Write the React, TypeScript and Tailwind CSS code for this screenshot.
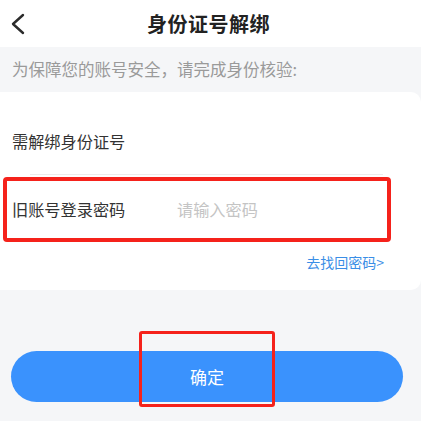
export default function App() {
  return (
    <div
      className="relative flex w-[429px] h-[421px] bg-white overflow-hidden"
      style={{ fontFamily: '"Noto Sans CJK SC", "Noto Sans", sans-serif' }}
    >
      <div className="flex flex-col w-[421px] h-full bg-[#f5f6f8]">
        {/* Header */}
        <div className="relative flex items-center justify-center h-[47px] bg-white">
          <svg
            className="absolute left-[10px] top-[13px]"
            width="16"
            height="22"
            viewBox="0 0 16 22"
            fill="none"
          >
            <path d="M13 2 L3 11 L13 20" stroke="#2b2b2b" strokeWidth="2.4" strokeLinecap="round" strokeLinejoin="round" />
          </svg>
          <span className="-ml-[4px] text-[20px] leading-[20px] font-bold text-[#222] tracking-[0.5px]">身份证号解绑</span>
        </div>

        {/* Notice */}
        <div className="flex items-center h-[45px] px-[12px] text-[16.5px] text-[#9a9a9a]">
          为保障您的账号安全，请完成身份核验:
        </div>

        {/* Card */}
        <div className="flex flex-col h-[198px] bg-white rounded-r-[10px]">
          <div className="mt-[41px] px-[12px] text-[16.2px] leading-[16px] text-[#333]">需解绑身份证号</div>
          <div className="mt-[25px] ml-[30px] w-[353px] h-px bg-[#ececec]" />
          <div className="flex mt-[26px] px-[12px] text-[16.2px] leading-[16px]">
            <span className="w-[165px] text-[#333]">旧账号登录密码</span>
            <span className="text-[#c4c4c4]">请输入密码</span>
          </div>
          <div className="flex justify-end mt-[38px] pr-[37px] text-[14px] leading-[14px] text-[#3a8ee6]">
            去找回密码&gt;
          </div>
        </div>

        {/* Button */}
        <button className="mt-[61px] ml-[11px] w-[392px] h-[51px] rounded-full bg-[#3a92fd] text-white text-[17px]">
          确定
        </button>
      </div>

      {/* Red highlight boxes */}
      <div className="absolute left-[3px] top-[177px] w-[388px] h-[65px] border-[4px] border-[#f5221b] rounded-[4px]" />
      <div className="absolute left-[139px] top-[331px] w-[136px] h-[76px] border-[3px] border-[#f5221b] rounded-[3px]" />
    </div>
  )
}
